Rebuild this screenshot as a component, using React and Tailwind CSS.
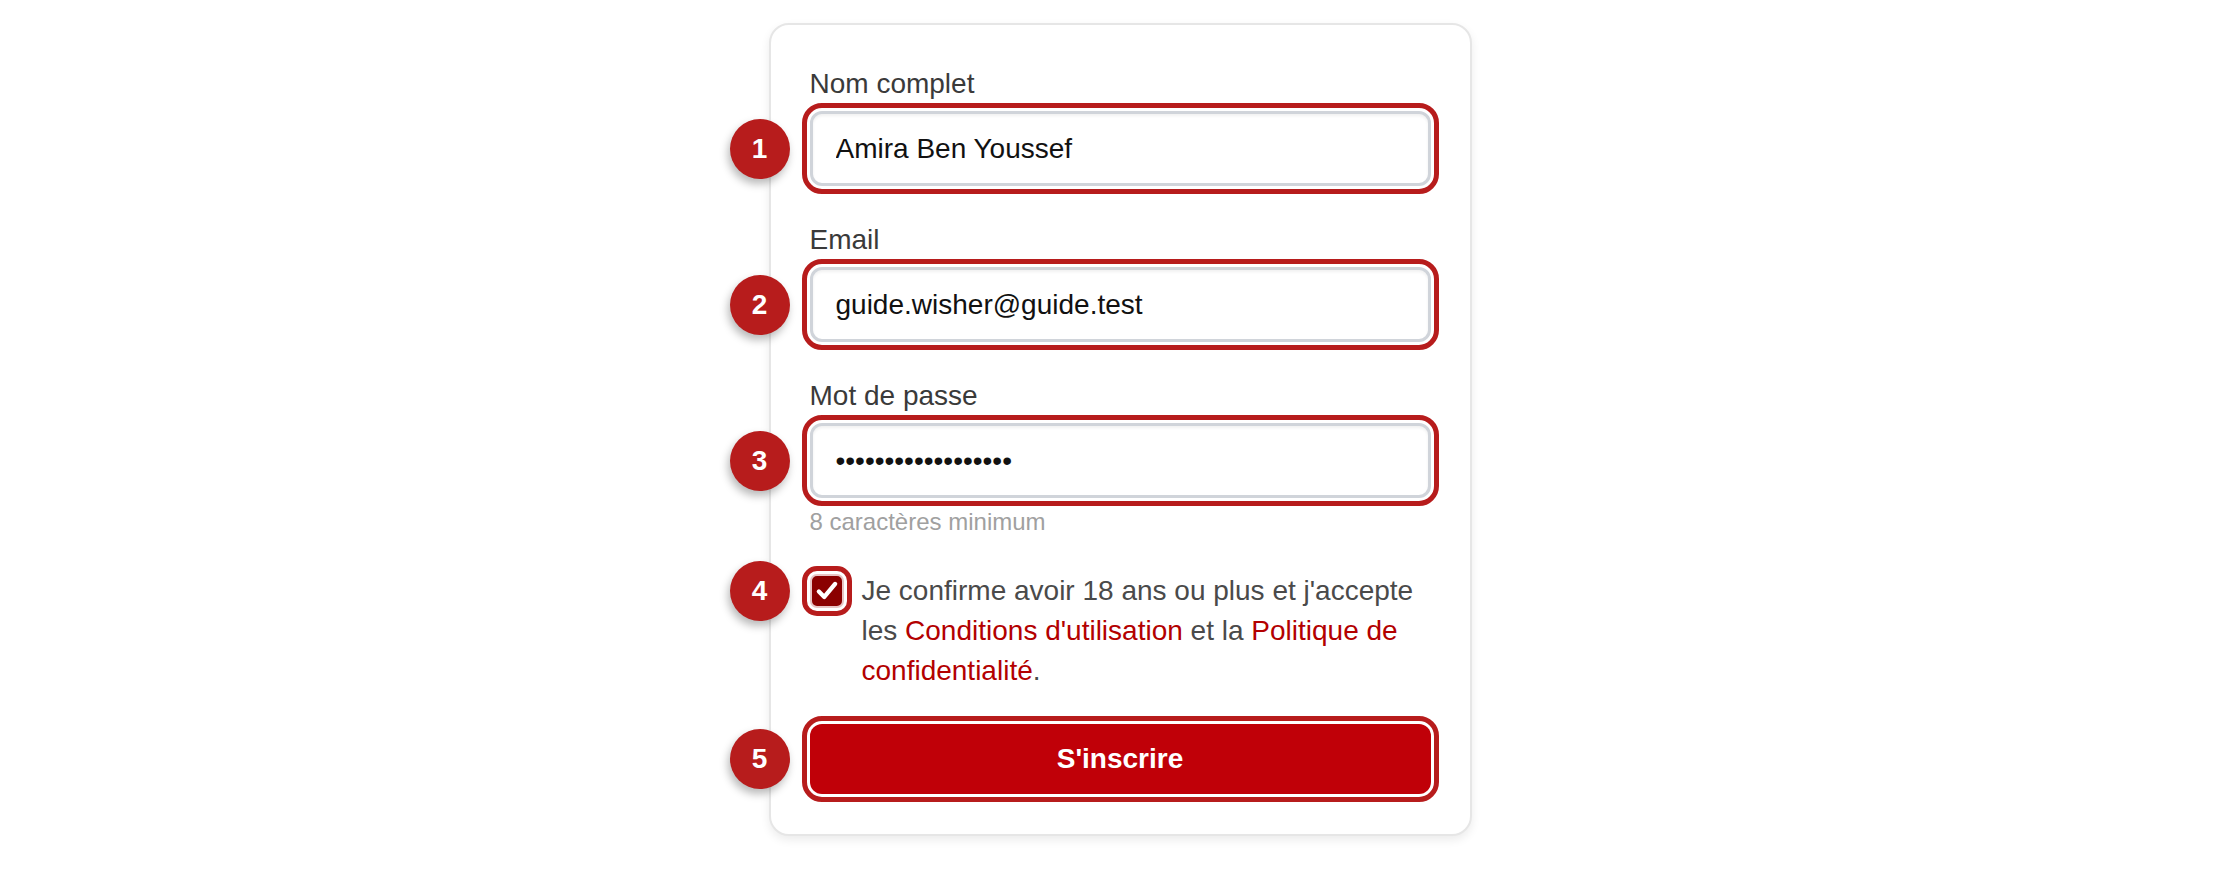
import React from 'react';

const ring = 'outline-[5px] outline-solid outline-[#b71c1c] outline-offset-[3px]';

function Badge({ n }) {
  return (
    <div className="absolute left-[-80px] top-1/2 -translate-y-1/2 w-[60px] h-[60px] rounded-full bg-[#b71c1c] text-white font-bold text-[28px] flex items-center justify-center shadow-[-2px_5px_8px_rgba(0,0,0,0.28)]">
      {n}
    </div>
  );
}

function Field({ label, n, type = 'text', value, first }) {
  return (
    <div className={first ? '' : 'mt-[33px]'}>
      <label className="block text-[28px] leading-[42px] text-[#3a3a3a] mb-[6px]">{label}</label>
      <div className="relative">
        <Badge n={n} />
        <input
          type={type}
          value={value}
          readOnly
          className={`block w-full h-[75px] px-[23px] rounded-[12px] border-[3px] border-[#d0d4da] bg-white text-[28px] text-[#111] shadow-[inset_0_2px_3px_rgba(0,0,0,0.06)] ${ring}`}
        />
      </div>
    </div>
  );
}

export default function App() {
  return (
    <div className="min-h-screen bg-white pt-[23px] font-['Liberation_Sans',Arial,sans-serif]">
      <div className="mx-auto w-[703px] rounded-[20px] border-2 border-[#e6e6e6] bg-white px-[39px] pt-[38px] pb-[40px] shadow-[0_4px_10px_rgba(0,0,0,0.08)]">
        <Field first label="Nom complet" n={1} value="Amira Ben Youssef" />
        <Field label="Email" n={2} type="email" value="guide.wisher@guide.test" />
        <Field label="Mot de passe" n={3} type="password" value="abcdefghijklmnopqr" />
        <p className="mt-[6px] text-[24px] leading-[36px] text-[#a0a0a0]">8 caractères minimum</p>

        {/* consent */}
        <div className="mt-[31px] flex gap-[18px]">
          <div className="relative mt-[3px] shrink-0 w-[34px] h-[34px]">
            <Badge n={4} />
            <div className={`w-[34px] h-[34px] rounded-[7px] border-2 border-[#e8c4c4] bg-[#8b0000] flex items-center justify-center ${ring}`}>
              <svg viewBox="0 0 24 24" className="w-[26px] h-[26px]" fill="none" stroke="white" strokeWidth="4" strokeLinecap="round" strokeLinejoin="round">
                <polyline points="4.5 12.5 9.5 17.5 19.5 5.5" />
              </svg>
            </div>
          </div>
          <p className="text-[28px] leading-[40px] text-[#4a4a4a]">
            Je confirme avoir 18 ans ou plus et j'accepte les{' '}
            <a className="text-[#b30000]">Conditions d'utilisation</a> et la{' '}
            <a className="text-[#b30000]">Politique de confidentialité</a>.
          </p>
        </div>

        <div className="relative mt-[33px]">
          <Badge n={5} />
          <button className={`block w-full h-[70px] rounded-[12px] bg-[#c00008] text-white font-bold text-[28px] ${ring}`}>
            S'inscrire
          </button>
        </div>
      </div>
    </div>
  );
}
